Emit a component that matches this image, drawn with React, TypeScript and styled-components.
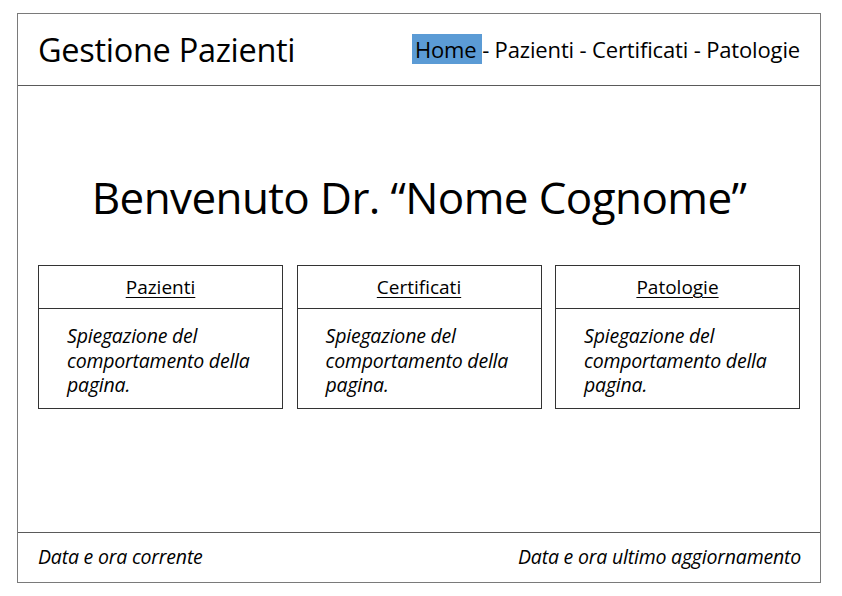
import React from "react";
import styled, { createGlobalStyle } from "styled-components";

const Global = createGlobalStyle`
  html, body { margin: 0; padding: 0; background: #ffffff; }
  body { font-family: "Open Sans", "Liberation Sans", sans-serif; color: #000; }
`;

const Frame = styled.div`
  box-sizing: border-box;
  margin: 13px 0 0 17px;
  width: 804px;
  height: 570px;
  border: 1.5px solid #7a7a7a;
  display: flex;
  flex-direction: column;
`;

const Header = styled.header`
  box-sizing: border-box;
  height: 72px;
  border-bottom: 1.5px solid #5a5a5a;
  display: flex;
  align-items: center;
  justify-content: space-between;
  padding: 0 20px 0 20px;
`;

const Title = styled.h1`
  margin: 0;
  font-weight: 400;
  font-size: 32.5px;
  letter-spacing: -0.3px;
`;

const Nav = styled.nav`
  display: flex;
  align-items: center;
  font-size: 22px;
  letter-spacing: -0.15px;
  white-space: pre;
  margin-top: -2px;
`;

const NavItem = styled.span<{ $active?: boolean }>`
  background: ${(p) => (p.$active ? "#5b9bd5" : "transparent")};
  padding: ${(p) => (p.$active ? "0 0 0 3px" : "0")};
`;

const Main = styled.main`
  flex: 1;
  display: flex;
  flex-direction: column;
  padding: 0 20px;
`;

const Welcome = styled.h2`
  margin: 80px 0 0;
  font-weight: 400;
  font-size: 44px;
  text-align: center;
  letter-spacing: -0.6px;
  line-height: 62px;
`;

const Cards = styled.div`
  display: grid;
  grid-template-columns: repeat(3, 245px);
  justify-content: space-between;
  margin-top: 37px;
`;

const Card = styled.section`
  box-sizing: border-box;
  border: 1px solid #333;
  height: 144px;
  display: flex;
  flex-direction: column;
`;

const CardHead = styled.div`
  box-sizing: border-box;
  height: 43px;
  border-bottom: 1px solid #333;
  display: flex;
  align-items: center;
  justify-content: center;
  font-size: 19px;
  text-decoration: underline;
  text-underline-offset: 3px;
  text-decoration-thickness: 1px;
`;

const CardBody = styled.p`
  margin: 0;
  padding: 15px 10px 0 28px;
  font-size: 19.5px;
  font-style: italic;
  line-height: 24.5px;
  letter-spacing: -0.2px;
`;

const Footer = styled.footer`
  box-sizing: border-box;
  height: 50px;
  border-top: 1.5px solid #5a5a5a;
  display: flex;
  align-items: center;
  justify-content: space-between;
  padding: 0 19px 2px 20px;
  font-style: italic;
  font-size: 19.5px;
  letter-spacing: -0.2px;
`;

const cards = ["Pazienti", "Certificati", "Patologie"];

export default function App() {
  return (
    <>
      <Global />
      <Frame>
        <Header>
          <Title>Gestione Pazienti</Title>
          <Nav>
            <NavItem $active>Home </NavItem>
            <NavItem>- Pazienti - Certificati - Patologie</NavItem>
          </Nav>
        </Header>
        <Main>
          <Welcome>Benvenuto Dr. “Nome Cognome”</Welcome>
          <Cards>
            {cards.map((c) => (
              <Card key={c}>
                <CardHead>{c}</CardHead>
                <CardBody>Spiegazione del comportamento della pagina.</CardBody>
              </Card>
            ))}
          </Cards>
        </Main>
        <Footer>
          <span>Data e ora corrente</span>
          <span>Data e ora ultimo aggiornamento</span>
        </Footer>
      </Frame>
    </>
  );
}
